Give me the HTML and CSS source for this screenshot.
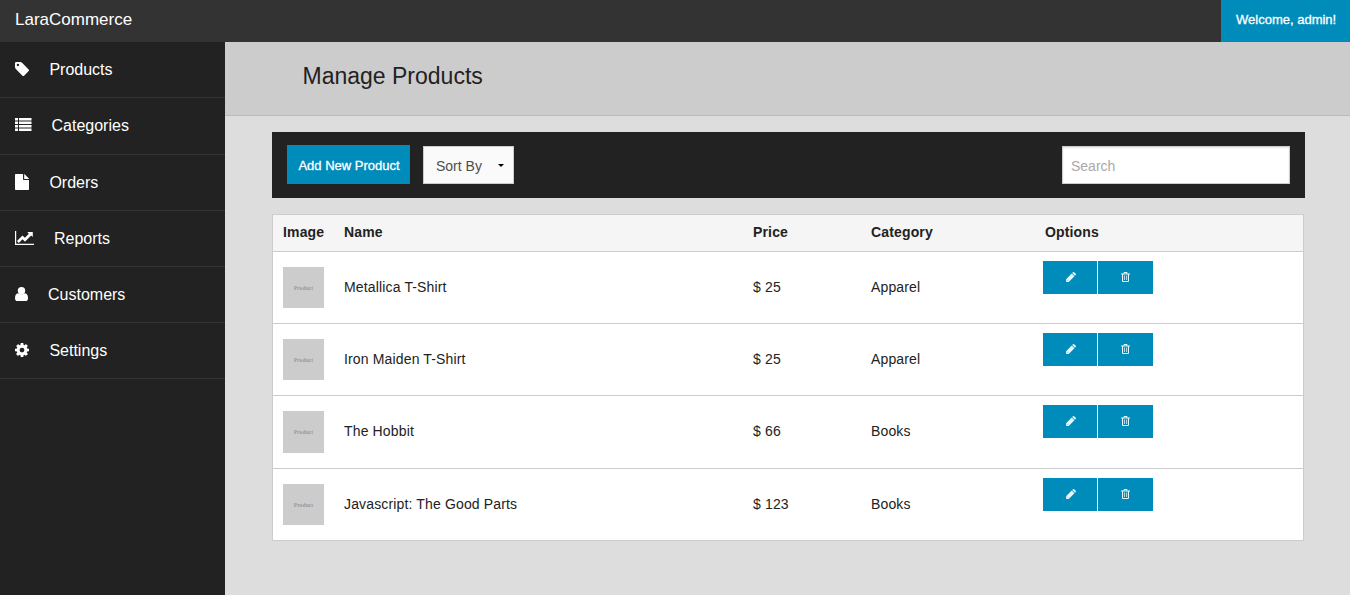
FILE: index.html
```
<!DOCTYPE html>
<html lang="en">
<head>
<meta charset="utf-8">
<title>LaraCommerce</title>
<link rel="stylesheet" href="styles.css">
</head>
<body>
<svg class="defs" aria-hidden="true">
  <symbol id="pencil" viewBox="0 0 10 10"><path d="M.1 9.900V7.200L5.700 1.600l2.700 2.700-5.600 5.600zM6.200 1.100l.8-.8q.6-.5 1.200 0l1.500 1.500q.6.600 0 1.200l-.8.800z"/><path class="cut" d="M1.300 7.800l.9.900"/></symbol>
  <symbol id="trash" viewBox="0 0 9 10"><path fill="none" stroke="currentColor" d="M0 2h9M3 2V.5h3V2M1.500 2v7.500h6V2"/><path fill="none" stroke="currentColor" stroke-width=".8" d="M3.400 3.500V8M5.600 3.500V8"/></symbol>
</svg>
<header class="topbar">
  <div class="brand">LaraCommerce</div>
  <div class="welcome">Welcome, admin!</div>
</header>
<div class="layout">
  <nav class="sidebar">
    <a class="item products"><svg width="14" height="14" viewBox="128 128 1515 1515"><path d="M576 448q0-53-37.500-90.500t-90.500-37.500-90.500 37.500-37.500 90.500 37.500 90.500 90.500 37.500 90.500-37.500 37.500-90.500zm1067 576q0 53-37 90l-491 492q-39 37-91 37-53 0-90-37l-715-716q-38-37-64.500-101t-26.500-117v-416q0-52 38-90t90-38h416q53 0 117 26.500t102 64.500l715 714q37 39 37 91z"/></svg><span>Products</span></a>
    <a class="item categories"><svg width="17" height="13" viewBox="0 0 17 13"><path d="M0 0h3v2.500H0zM4 0h12.500v2.500H4zM0 3.500h3V6H0zM4 3.500h12.500V6H4zM0 7h3v2.500H0zM4 7h12.500v2.500H4zM0 10.500h3V13H0zM4 10.500h12.500V13H4z"/></svg><span>Categories</span></a>
    <a class="item orders"><svg width="14" height="16" viewBox="0 0 14 16"><path d="M.8 0H8v5.200q0 .8.800.8H14v9.200q0 .8-.8.800H.8q-.8 0-.8-.8V.8Q0 0 .8 0zM9.200.1q.4.200.7.500l3.500 3.500q.3.300.5.800H9.200z"/></svg><span>Orders</span></a>
    <a class="item reports"><svg width="19" height="14" viewBox="0 0 19 14"><path d="M0 0h1.200v12.800H19V14H0zM17.800 1.300v4.200q-.1.500-.6.100l-1.100-1.100-5.900 5.900q-.3.200-.5 0L7.500 8.200l-3.700 3.700L2 10.100l5.200-5.400q.3-.2.500 0l2.200 2.100 4-4-1.200-1q-.3-.5.300-.7h4.500q.3 0 .3.200z"/></svg><span>Reports</span></a>
    <a class="item customers"><svg width="13" height="14" viewBox="0 0 13 14"><path d="M3 6.200Q4.600 7.300 6.500 7.300T10 6.200Q13 6.700 13 11.200 13 14 10.600 14H2.400Q0 14 0 11.200 0 6.700 3 6.200z"/><circle cx="6.500" cy="3.700" r="3.700"/></svg><span>Customers</span></a>
    <a class="item settings"><svg width="14" height="14" viewBox="128 128 1536 1536"><path d="M1152 896q0-106-75-181t-181-75-181 75-75 181 75 181 181 75 181-75 75-181zm512-109v222q0 12-8 23t-20 13l-185 28q-19 54-39 91 35 50 107 138 10 12 10 25t-9 23q-27 37-99 108t-94 71q-12 0-26-9l-138-108q-44 23-91 38-16 136-29 186-7 28-36 28h-222q-14 0-24.500-8.500t-11.500-21.500l-28-184q-49-16-90-37l-141 107q-10 9-25 9-14 0-25-11-126-114-165-168-7-10-7-23 0-12 8-23 15-21 51-66.500t54-70.500q-27-50-41-99l-183-27q-13-2-21-12.500t-8-23.500v-222q0-12 8-23t19-13l186-28q14-46 39-92-40-57-107-138-10-12-10-24 0-10 9-23 26-36 98.500-107.500t94.500-71.500q13 0 26 10l138 107q44-23 91-38 16-136 29-186 7-28 36-28h222q14 0 24.500 8.500t11.500 21.500l28 184q49 16 90 37l142-107q9-9 24-9 13 0 25 10 129 119 165 170 7 8 7 22 0 12-8 23-15 21-51 66.500t-54 70.500q26 50 41 98l183 28q13 2 21 12.500t8 23.500z"/></svg><span>Settings</span></a>
  </nav>
  <main class="main">
    <div class="heading"><h1>Manage Products</h1></div>
    <div class="content">
      <div class="toolbar">
        <button class="add">Add New Product</button>
        <div class="sort"><span>Sort By</span><svg width="6" height="3" viewBox="0 0 6 3"><path d="M0 0h6L3 3z"/></svg></div>
        <input class="search" type="text" placeholder="Search">
      </div>
      <div class="table">
        <div class="row head"><div>Image</div><div>Name</div><div>Price</div><div>Category</div><div class="opt-title">Options</div></div>
        <div class="row"><div class="thumb">Product</div><div class="cell">Metallica T-Shirt</div><div class="cell">$ 25</div><div class="cell">Apparel</div><div class="options"><button><svg width="10" height="10"><use href="#pencil"/></svg></button><button><svg width="9" height="10"><use href="#trash"/></svg></button></div></div>
        <div class="row"><div class="thumb">Product</div><div class="cell">Iron Maiden T-Shirt</div><div class="cell">$ 25</div><div class="cell">Apparel</div><div class="options"><button><svg width="10" height="10"><use href="#pencil"/></svg></button><button><svg width="9" height="10"><use href="#trash"/></svg></button></div></div>
        <div class="row tall"><div class="thumb">Product</div><div class="cell">The Hobbit</div><div class="cell">$ 66</div><div class="cell">Books</div><div class="options"><button><svg width="10" height="10"><use href="#pencil"/></svg></button><button><svg width="9" height="10"><use href="#trash"/></svg></button></div></div>
        <div class="row"><div class="thumb">Product</div><div class="cell">Javascript: The Good Parts</div><div class="cell">$ 123</div><div class="cell">Books</div><div class="options"><button><svg width="10" height="10"><use href="#pencil"/></svg></button><button><svg width="9" height="10"><use href="#trash"/></svg></button></div></div>
      </div>
    </div>
  </main>
</div>
</body>
</html>
```
FILE: styles.css
```
* { box-sizing: border-box; }
body {
  margin: 0;
  height: 595px;
  overflow: hidden;
  display: flex;
  flex-direction: column;
  font-family: "Liberation Sans", Arial, sans-serif;
  font-size: 14px;
  color: #222;
  background: #ddd;
}
svg { display: block; fill: currentColor; flex: none; }
.defs { display: none; }
.cut { stroke: #008cba; stroke-width: 0.5; }
button, input { font-family: inherit; border: 0; border-radius: 0; }

.topbar {
  height: 42px;
  flex: none;
  display: flex;
  justify-content: space-between;
  background: #333;
  color: #fff;
}
.brand { padding-left: 15px; font-size: 17px; line-height: 39px; }
.welcome {
  width: 129px;
  padding-left: 15px;
  font-size: 13px;
  line-height: 40px;
  background: #008cba;
  -webkit-text-stroke: 0.3px #fff;
  white-space: nowrap;
}

.layout { flex: 1; display: flex; }
.sidebar { width: 225px; flex: none; background: #222; color: #fff; }
.item {
  height: 56px;
  display: flex;
  align-items: center;
  gap: 20px;
  padding-left: 15px;
  border-bottom: 1px solid #333;
  font-size: 16px;
}
.item svg { margin-bottom: 2px; }
.categories { height: 57px; }
.item.categories svg { margin-bottom: 3px; }
.item.orders svg { margin-bottom: 1px; }
.categories span { margin-left: -0.5px; }
.products span, .orders span, .settings span { margin-left: 0.4px; }

.main { flex: 1; }
.heading {
  height: 74px;
  padding-left: 77.5px;
  background: #ccc;
  border-bottom: 1px solid #bbb;
}
.heading h1 { margin: 0; font-size: 23px; font-weight: 400; line-height: 68px; }
.content { padding: 16px 45px 0 47px; }
.toolbar {
  height: 66px;
  display: flex;
  align-items: flex-start;
  padding: 13px 15px 0;
  background: #222;
}
.add {
  width: 123px;
  height: 39px;
  padding: 2px 0 0 1px;
  background: #008cba;
  color: #fff;
  font-size: 13px;
  -webkit-text-stroke: 0.3px #fff;
}
.sort {
  width: 91px;
  height: 38px;
  margin: 1px 0 0 13px;
  padding: 2px 9px 0 12px;
  display: flex;
  align-items: center;
  justify-content: space-between;
  background: #fafafa;
  border: 1px solid #ccc;
  color: #4d4d4d;
}
.sort svg { color: #000; margin-bottom: 1px; }
.search {
  width: 228px;
  height: 38px;
  margin: 1px 0 0 auto;
  padding: 2px 8px 0;
  border: 1px solid #ccc;
  background: #fff;
  box-shadow: inset 0 1px 2px rgba(0, 0, 0, 0.1);
  font-size: 14px;
}
.search::placeholder { color: #a9a9a9; }

.table {
  width: 1032px;
  margin-top: 16px;
  background: #fff;
  border: 1px solid #ccc;
}
.row {
  height: 72px;
  display: grid;
  grid-template-columns: 61px 409px 118px 172px 1fr;
  align-items: center;
  padding-left: 10px;
  border-bottom: 1px solid #ccc;
  letter-spacing: 0.15px;
}
.row:last-child { height: 71px; border-bottom: 0; }
.row.tall { height: 73px; }
.row.head { height: 37px; padding-bottom: 3px; background: #f5f5f5; font-weight: 700; }
.cell { padding-bottom: 2px; }
.opt-title { padding-left: 2px; }
.thumb {
  width: 41px;
  height: 41px;
  background: #ccc;
  color: #999;
  font: 700 5.5px/43px "Liberation Serif", serif;
  letter-spacing: 0.1px;
  text-align: center;
}
.tall .thumb { height: 42px; }
.options { align-self: start; display: flex; gap: 1px; padding-top: 9px; }
.options button {
  width: 55px;
  height: 33px;
  padding: 0 0 1px;
  display: flex;
  align-items: center;
  justify-content: center;
  background: #008cba;
  color: #e6f6fb;
}
.options button:first-child { width: 54px; padding-left: 1px; }
```
